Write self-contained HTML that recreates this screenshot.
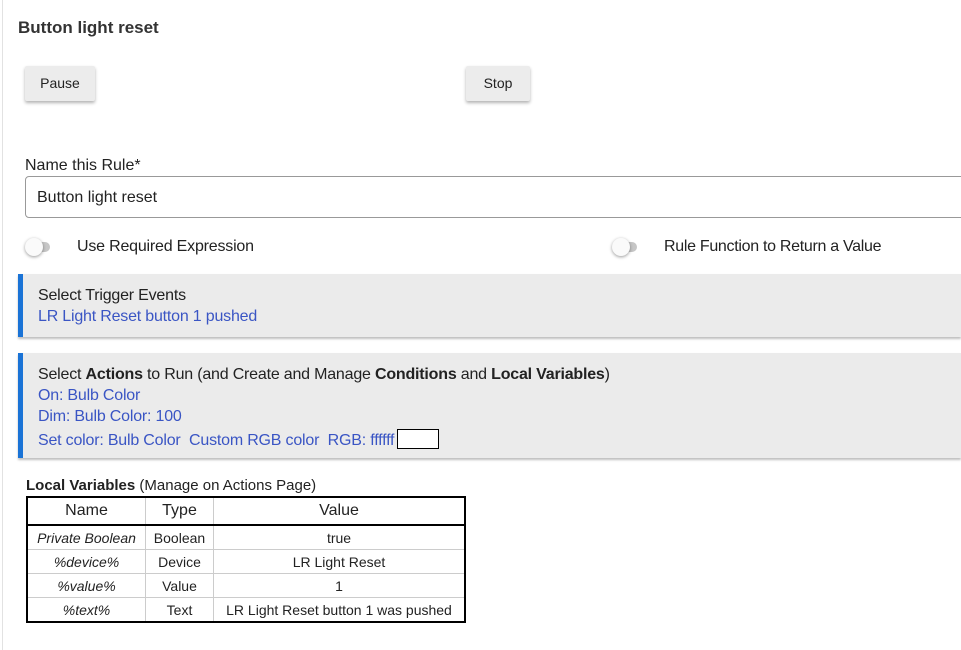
<!DOCTYPE html>
<html><head><style>
body{margin:0;width:961px;height:650px;background:#fff;font-family:"Liberation Sans",sans-serif;color:#222;position:relative;overflow:hidden}
.a{position:absolute;white-space:nowrap}
.btn{position:absolute;background:#ececec;box-shadow:0 2px 3px rgba(0,0,0,.3);font-size:14px;text-align:center;border-radius:2px}
.tg{position:absolute;width:22px;height:10px;background:#c6c6c6;border-radius:5px}
.tg:after{content:"";position:absolute;left:-3px;top:-4px;width:18px;height:18px;border-radius:50%;background:#fafafa;box-shadow:0 1px 3px rgba(0,0,0,.4)}
.panel{position:absolute;left:18px;right:0;background:#ebebeb;border-left:5px solid #1a73d6;box-shadow:0 2px 2px rgba(0,0,0,.25);font-size:16px;letter-spacing:-0.2px}
.blue{color:#3a55c4}
table{position:absolute;left:26px;top:496px;border-collapse:collapse;border:2px solid #000;font-size:14px}
td,th{border:1px solid #ccc;text-align:center;padding:0;height:23px}
th{font-weight:normal;font-size:16px;border-bottom:2px solid #000;height:26px}
td:first-child,th:first-child{border-left:none}
</style></head><body>
<div style="position:absolute;left:2px;top:0;width:1px;height:650px;background:#e2e2e2"></div>
<div class="a" style="left:18px;top:18px;font-size:17px;font-weight:bold;color:#333">Button light reset</div>
<div class="btn" style="left:25px;top:66px;width:70px;height:35px;line-height:35px">Pause</div>
<div class="btn" style="left:466px;top:66px;width:64px;height:35px;line-height:35px">Stop</div>
<div class="a" style="left:25px;top:157px;font-size:16px">Name this Rule*</div>
<div style="position:absolute;left:25px;top:176px;width:960px;height:40px;border:1px solid #999;border-radius:4px"></div>
<div class="a" style="left:37px;top:189px;font-size:16px">Button light reset</div>
<div class="tg" style="left:28px;top:242px"></div>
<div class="a" style="left:77px;top:238px;font-size:16px;letter-spacing:-0.2px">Use Required Expression</div>
<div class="tg" style="left:615px;top:242px"></div>
<div class="a" style="left:664px;top:238px;font-size:16px;letter-spacing:-0.3px">Rule Function to Return a Value</div>
<div class="panel" style="top:274px;height:63px">
<div class="a" style="left:15px;top:13px">Select Trigger Events</div>
<div class="a blue" style="left:15px;top:34px">LR Light Reset button 1 pushed</div></div>
<div class="panel" style="top:353px;height:105px">
<div class="a" style="left:15px;top:13px">Select <b>Actions</b> to Run (and Create and Manage <b>Conditions</b> and <b>Local Variables</b>)</div>
<div class="a blue" style="left:15px;top:34px">On: Bulb Color</div>
<div class="a blue" style="left:15px;top:55px">Dim: Bulb Color: 100</div>
<div class="a blue" style="left:15px;top:76px">Set color: Bulb Color&nbsp; Custom RGB color&nbsp; RGB: ffffff<span style="display:inline-block;width:40px;height:18px;border:1px solid #000;background:#fff;vertical-align:-4px;margin-left:3px"></span></div></div>
<div class="a" style="left:26px;top:477px;font-size:15px"><b>Local Variables</b> (Manage on Actions Page)</div>
<table>
<tr><th style="width:117px">Name</th><th style="width:67px">Type</th><th style="width:250px">Value</th></tr>
<tr><td><i>Private Boolean</i></td><td>Boolean</td><td>true</td></tr>
<tr><td><i>%device%</i></td><td>Device</td><td>LR Light Reset</td></tr>
<tr><td><i>%value%</i></td><td>Value</td><td>1</td></tr>
<tr><td><i>%text%</i></td><td>Text</td><td>LR Light Reset button 1 was pushed</td></tr>
</table>
</body></html>
